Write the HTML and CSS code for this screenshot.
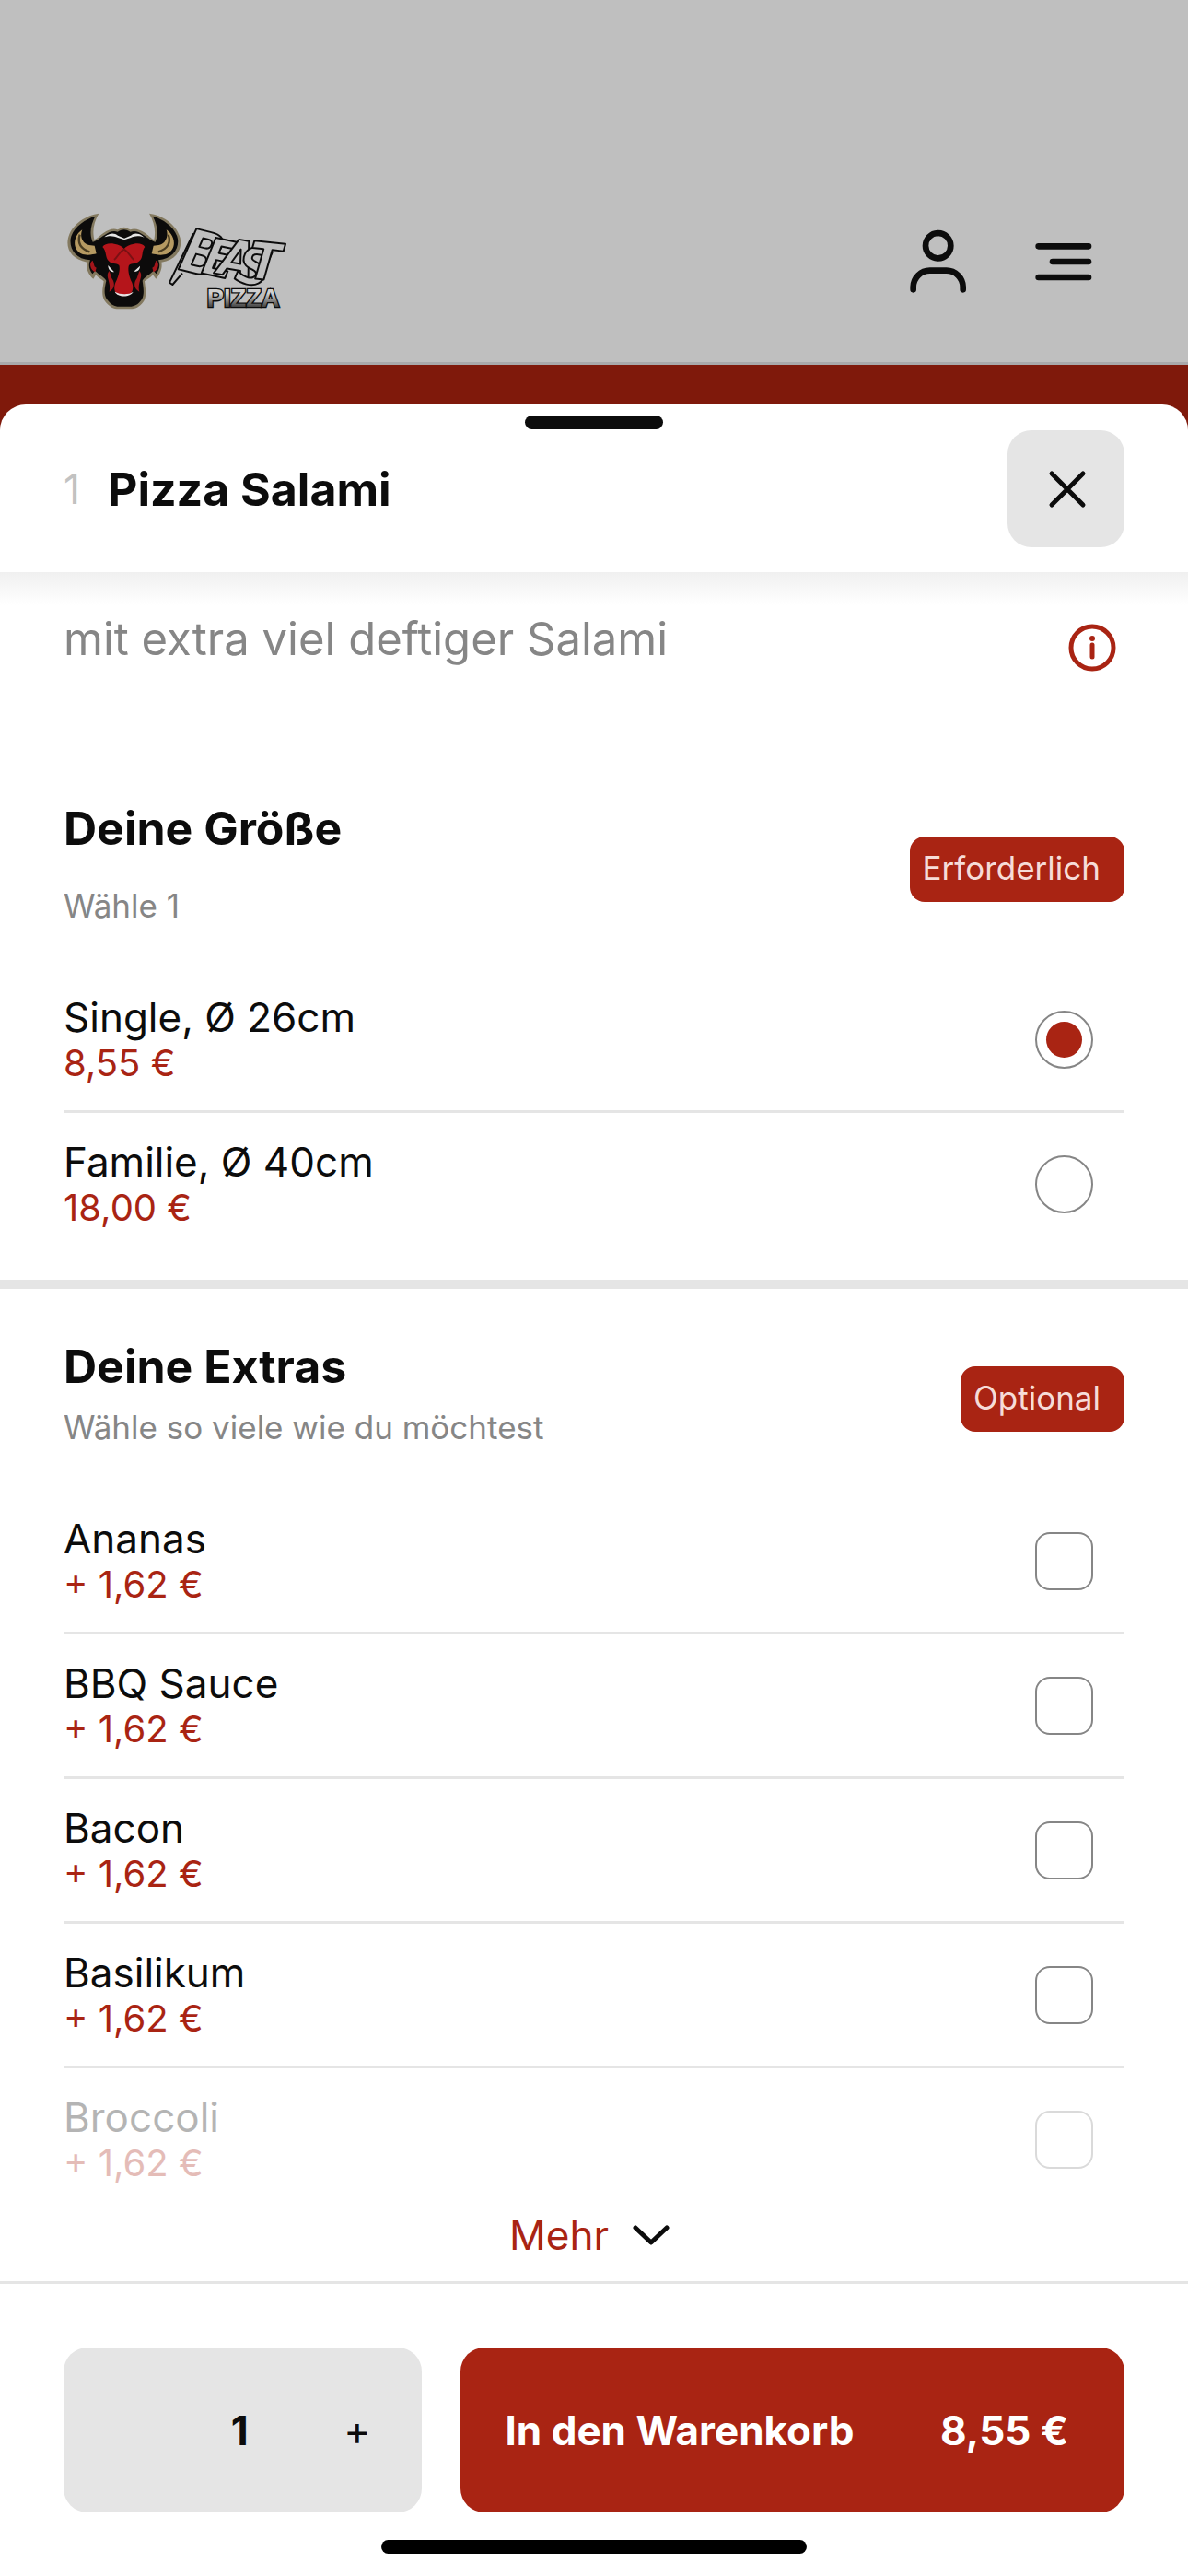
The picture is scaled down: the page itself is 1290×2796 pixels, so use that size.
FILE: index.html
```html
<!DOCTYPE html>
<html lang="de">
<head>
<meta charset="utf-8">
<meta name="viewport" content="width=device-width, initial-scale=1">
<title>Beast Pizza – Pizza Salami</title>
<link rel="stylesheet" href="styles.css">
</head>
<body>
<header class="topbar">
  <a class="logo" href="#" aria-label="Beast Pizza">
    <svg class="logo-art" viewBox="27 27 723 330">
      <defs>
        <linearGradient id="steel" x1="0" y1="0" x2="0" y2="1">
          <stop offset="0.35" stop-color="#d0d0d0"/><stop offset="0.9" stop-color="#2a2a2a"/>
        </linearGradient>
      </defs>
      <!-- bull head -->
      <path d="M142 35C100 40 52 72 42 115C34 150 52 185 104 194C98 215 110 236 124 248L132 235C140 245 152 250 158 256C154 280 150 300 160 318C172 334 186 345 200 346H250C266 345 280 334 290 318C298 300 294 280 291 256C298 250 310 245 318 235L328 248C340 236 350 215 346 194C398 185 414 150 407 115C396 72 350 40 306 35C322 62 328 90 322 120C316 120 306 108 292 98C276 88 258 82 245 88C236 84 230 80 224 80C218 80 210 84 203 88C190 82 172 88 158 98C146 106 134 120 127 120C120 90 126 62 142 35Z" fill="#83795f"/>
      <path d="M130 44C96 54 56 82 50 118C46 150 66 184 114 187C106 204 112 220 121 232L130 222C142 236 158 240 166 254C160 280 158 298 167 313C178 328 188 337 202 338H248C262 337 274 328 283 313C290 298 288 280 284 254C292 240 306 236 320 222L329 232C338 220 344 204 336 187C382 184 404 150 399 118C392 82 354 54 318 44C332 72 338 100 326 128C314 126 304 116 288 106C272 94 258 90 245 95C234 90 230 88 224 88C218 88 212 90 203 95C190 90 176 94 160 106C146 114 134 126 122 128C110 100 116 72 130 44Z" fill="#0c0b0b"/>
      <path d="M88 88C58 108 54 150 84 166C104 174 124 168 134 166L128 140C112 140 96 136 90 124C82 112 84 98 88 88Z" fill="#b69a62"/>
      <path d="M80 104C72 130 82 150 112 160" fill="none" stroke="#4a3d22" stroke-width="7"/>
      <path d="M362 88C392 108 396 150 366 166C346 174 326 168 314 166L320 140C336 140 352 136 358 124C366 112 366 98 362 88Z" fill="#b69a62"/>
      <path d="M368 104C378 130 366 150 336 160" fill="none" stroke="#4a3d22" stroke-width="7"/>
      <path d="M160 112C176 98 192 97 204 107L225 116L246 107C258 97 274 99 290 113C272 106 258 108 246 114L225 121L204 114C190 108 178 106 160 112Z" fill="#e4e4e4"/>
      <path d="M154 144C160 134 176 131 192 134C208 136 218 142 224 150C230 142 242 136 256 134C272 131 286 134 292 144C280 158 288 178 274 190C262 201 250 196 240 204C236 214 238 238 250 260C256 276 252 290 244 298C232 306 214 306 202 298C192 290 190 276 196 260C208 238 212 214 208 204C198 196 184 201 174 190C162 178 168 158 154 144Z" fill="#b5151b"/>
      <path d="M224 152C208 160 204 176 192 186M224 152C240 160 244 176 256 186" fill="none" stroke="#7a1114" stroke-width="6"/>
      <path d="M122 188C108 196 114 218 130 226L134 212L128 208ZM328 188C342 196 336 218 320 226L316 212L322 208ZM176 222C160 240 184 258 176 290C194 280 196 262 184 246ZM274 222C290 240 266 258 274 290C256 280 254 262 266 246Z" fill="#a3151a"/>
      <path d="M172 204L192 226C178 226 172 216 172 204ZM276 206L256 224C270 226 276 216 276 206ZM194 290C212 300 240 300 254 290C246 308 204 310 194 290Z" fill="#e4e4e4"/>
      <!-- lettering -->
      <path d="M450 100L372 260L382 267L414 230" fill="none" stroke="#0c0c0c" stroke-width="6" stroke-linejoin="round"/>
      <g class="logo-beast">
        <text class="logo-initial" transform="rotate(14 396 222)" x="396" y="216">B</text>
        <text transform="rotate(12 480 236)" x="472" y="230">E</text>
        <text transform="rotate(10 530 240)" x="524" y="232">A</text>
        <text transform="rotate(14 586 256)" x="580" y="254">S</text>
        <text transform="rotate(6 640 250)" x="624" y="246">T</text>
      </g>
      <text class="logo-pizza" x="494" y="338">PIZZA</text>
    </svg>
  </a>
  <nav class="topbar-actions">
    <button class="icon-button" type="button" aria-label="Konto">
      <svg width="64" height="70" viewBox="80 89 192 210" fill="none" stroke="#0c0c0c" stroke-width="20" stroke-linecap="round">
        <circle cx="175" cy="142" r="41"/><path d="M94 285V276A54 54 0 0 1 148 223H202A54 54 0 0 1 256 276V285"/>
      </svg>
    </button>
    <button class="icon-button" type="button" aria-label="Menü">
      <svg width="62" height="42" viewBox="491 130 186 126" fill="none" stroke="#0c0c0c" stroke-width="20" stroke-linecap="round">
        <path d="M502 143H665M548 193H665M502 244H665"/>
      </svg>
    </button>
  </nav>
</header>

<div class="stage">
  <main class="sheet">
    <header class="sheet-head">
      <div class="grabber"></div>
      <div class="sheet-bar">
        <span class="item-number">1</span>
        <h1 class="heading">Pizza Salami</h1>
        <button class="close" type="button" aria-label="Schließen">
          <svg width="42" height="42" viewBox="0 0 42 42" fill="none" stroke="#0c0c0c" stroke-width="5" stroke-linecap="round"><path d="M4 4L38 38M38 4L4 38"/></svg>
        </button>
      </div>
    </header>

    <section class="intro">
      <p class="description">mit extra viel deftiger Salami</p>
      <button class="info" type="button" aria-label="Produktinformationen">
        <svg width="52" height="52" viewBox="0 0 52 52" fill="none" stroke="#a92413" stroke-linecap="round"><circle cx="26" cy="26" r="23" stroke-width="5"/><path d="M26 23V36" stroke-width="5"/><path d="M26 16V16" stroke-width="6"/></svg>
      </button>
    </section>

    <section class="group group-size">
      <div class="group-head">
        <div class="group-titles spaced">
          <h2 class="heading">Deine Größe</h2>
          <p class="hint">Wähle 1</p>
        </div>
        <span class="badge">Erforderlich</span>
      </div>
      <ul class="options">
        <li><label class="option"><span class="option-text"><span class="name">Single, Ø 26cm</span><span class="price">8,55 €</span></span><input class="radio" type="radio" name="size" checked></label></li>
        <li><label class="option"><span class="option-text"><span class="name">Familie, Ø 40cm</span><span class="price">18,00 €</span></span><input class="radio" type="radio" name="size"></label></li>
      </ul>
    </section>

    <section class="group group-extras">
      <div class="group-head">
        <div class="group-titles">
          <h2 class="heading">Deine Extras</h2>
          <p class="hint">Wähle so viele wie du möchtest</p>
        </div>
        <span class="badge">Optional</span>
      </div>
      <ul class="options">
        <li><label class="option"><span class="option-text"><span class="name">Ananas</span><span class="price">+ 1,62 €</span></span><input class="checkbox" type="checkbox"></label></li>
        <li><label class="option"><span class="option-text"><span class="name">BBQ Sauce</span><span class="price">+ 1,62 €</span></span><input class="checkbox" type="checkbox"></label></li>
        <li><label class="option"><span class="option-text"><span class="name">Bacon</span><span class="price">+ 1,62 €</span></span><input class="checkbox" type="checkbox"></label></li>
        <li><label class="option"><span class="option-text"><span class="name">Basilikum</span><span class="price">+ 1,62 €</span></span><input class="checkbox" type="checkbox"></label></li>
        <li><label class="option faded"><span class="option-text"><span class="name">Broccoli</span><span class="price">+ 1,62 €</span></span><input class="checkbox" type="checkbox"></label></li>
      </ul>
      <button class="more" type="button">Mehr
        <svg width="40" height="24" viewBox="0 0 40 24" fill="none" stroke="#0c0c0c" stroke-width="5" stroke-linecap="round" stroke-linejoin="round"><path d="M3 4L20 20L37 4"/></svg>
      </button>
    </section>

    <footer class="cart-bar">
      <div class="cart-row">
        <div class="stepper">
          <button class="step" type="button" aria-label="Weniger" disabled></button>
          <input class="quantity" type="text" inputmode="numeric" value="1" aria-label="Anzahl">
          <button class="step" type="button" aria-label="Mehr">+</button>
        </div>
        <button class="add" type="button"><span>In den Warenkorb</span><span>8,55 €</span></button>
      </div>
      <div class="home-indicator"></div>
    </footer>
  </main>
</div>
</body>
</html>
```

FILE: styles.css
```css
:root {
  --ink: #0c0c0c;
  --red: #a92413;
  --gray: #868686;
  --line: #e5e5e5;
  --edge: 69px;
}

* { box-sizing: border-box; }

body {
  margin: 0;
  min-height: 100vh;
  display: flex;
  flex-direction: column;
  background: #bfbfbf;
  color: var(--ink);
  font-family: Inter, "Liberation Sans", sans-serif;
  font-size: 44px;
  line-height: 54px;
}

h1, h2, p, ul { margin: 0; padding: 0; }
ul { list-style: none; }
svg { display: block; }

button, input { font: inherit; color: inherit; margin: 0; }
button { padding: 0; border: 0; background: none; }

/* Dimmed page behind the sheet */
.topbar {
  display: flex;
  align-items: center;
  justify-content: space-between;
  padding: 229px 68px 54px var(--edge);
  border-bottom: 3px solid #a9a9ab;
}
.logo-art { width: 241px; height: 110px; overflow: visible; }
.logo-beast {
  font: italic 700 168px "DejaVu Sans Condensed", "Liberation Sans", sans-serif;
  fill: #bfbfbf;
  stroke: #0c0c0c;
  stroke-width: 6px;
  stroke-linejoin: round;
}
.logo-initial { font-size: 196px; }
.logo-pizza {
  font: 700 82px "Liberation Sans", sans-serif;
  fill: url(#steel);
  stroke: #0c0c0c;
  stroke-width: 8px;
  paint-order: stroke;
}
.topbar-actions { display: flex; gap: 2px; }
.icon-button {
  width: 134px;
  height: 110px;
  display: grid;
  place-items: center;
}

.stage {
  flex: 1;
  display: flex;
  flex-direction: column;
  padding-top: 43px;
  background: #7f190b;
}

.sheet {
  flex: 1;
  background: #fff;
  border-radius: 28px 28px 0 0;
}
.sheet-head { padding: 12px var(--edge) 27px; }
.grabber {
  width: 150px;
  height: 15px;
  margin: 0 auto 1px;
  border-radius: 8px;
  background: var(--ink);
}
.sheet-bar { display: flex; align-items: center; }
.item-number { width: 48px; color: #c2c2c2; }
.heading { font-size: 50px; line-height: 60px; font-weight: 700; }
.close {
  width: 127px;
  height: 127px;
  margin-left: auto;
  padding-left: 2px;
  display: grid;
  place-items: center;
  border-radius: 26px;
  background: var(--line);
}

.intro {
  display: flex;
  align-items: flex-start;
  justify-content: space-between;
  padding: 43px var(--edge) 0;
  min-height: 248px;
  background: linear-gradient(#f0f0f0, #fff 36px);
}
.description { font-size: 49px; line-height: 60px; color: var(--gray); }
.info { margin: 13px 9px 0 0; }

.group { padding-left: var(--edge); padding-right: var(--edge); }
.group-size { padding-bottom: 27px; border-bottom: 10px solid var(--line); }
.group-extras { padding-top: 54px; padding-bottom: 23px; }
.group-head {
  display: flex;
  align-items: center;
  justify-content: space-between;
  margin-bottom: 34px;
}
.group-titles {
  display: flex;
  flex-direction: column;
  gap: 14px;
  padding-bottom: 12px;
}
.group-titles.spaced { gap: 32px; }
.hint { font-size: 35px; line-height: 44px; color: var(--gray); }
.badge {
  padding: 12px 26px 15px 14px;
  border-radius: 16px;
  background: var(--red);
  color: #f6dcd8;
  font-size: 35px;
  line-height: 44px;
}

.options li + li { border-top: 3px solid var(--line); }
.option {
  display: flex;
  align-items: center;
  justify-content: space-between;
  min-height: 154px;
  padding-right: 34px;
}
.option-text { display: flex; flex-direction: column; padding-bottom: 2px; }
.price { font-size: 40px; line-height: 46px; color: var(--red); }
.faded { opacity: 0.3; }

.radio, .checkbox {
  appearance: none;
  width: 63px;
  height: 63px;
  border: 2px solid var(--gray);
  background: #fff;
}
.radio { display: grid; place-items: center; border-radius: 50%; }
.radio:checked::before {
  content: "";
  width: 39px;
  height: 39px;
  border-radius: 50%;
  background: var(--red);
}
.checkbox { border-radius: 16px; }
.checkbox:checked { background: var(--red); }

.more {
  display: flex;
  align-items: center;
  gap: 26px;
  margin: 0 auto;
  padding-right: 10px;
  color: var(--red);
}

.cart-bar {
  padding: 69px var(--edge) 24px;
  border-top: 3px solid var(--line);
}
.cart-row {
  display: grid;
  grid-template-columns: 35fr 65fr;
  gap: 42px;
}
.stepper, .add { min-height: 179px; border-radius: 26px; }
.stepper {
  display: grid;
  grid-template-columns: 1fr 1fr 1fr;
  padding-right: 6px;
  background: var(--line);
}
.quantity {
  width: 100%;
  padding: 0;
  border: 0;
  background: none;
  font-weight: 700;
  text-align: center;
}
.add {
  display: flex;
  align-items: center;
  justify-content: space-between;
  padding: 0 61px 0 49px;
  background: var(--red);
  color: #fff;
  font-weight: 700;
}
.home-indicator {
  width: 462px;
  height: 15px;
  margin: 30px auto 0;
  border-radius: 8px;
  background: #000;
}
```
